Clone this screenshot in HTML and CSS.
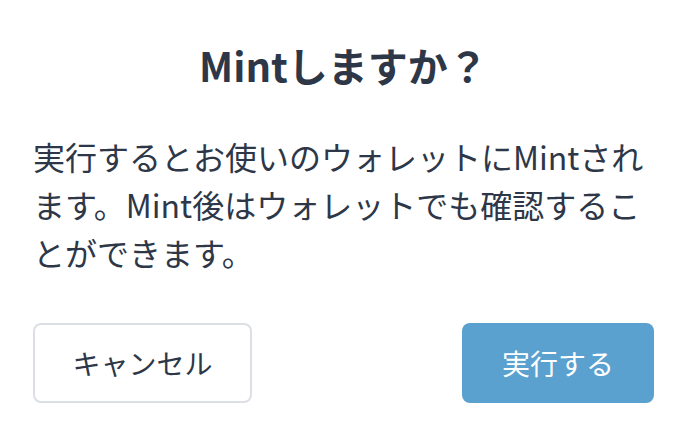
FILE: index.html
```html
<!DOCTYPE html>
<html lang="ja">
<head>
<meta charset="utf-8">
<link rel="stylesheet" href="styles.css">
</head>
<body>
<div class="dialog">
  <h1 class="title">Mintしますか？</h1>
  <p class="message">実行するとお使いのウォレットにMintされます。Mint後はウォレットでも確認することができます。</p>
  <div class="actions">
    <button class="btn btn-cancel">キャンセル</button>
    <button class="btn btn-primary">実行する</button>
  </div>
</div>
</body>
</html>
```
FILE: styles.css
```css
html, body {
  margin: 0;
  padding: 0;
  background: #ffffff;
}
body {
  font-family: "Noto Sans CJK JP", "Noto Sans", sans-serif;
  color: #2d3748;
}
.dialog {
  width: 686px;
  height: 436px;
  box-sizing: border-box;
  padding: 38px 32px 0 33px;
  display: flex;
  flex-direction: column;
}
.title {
  margin: 0;
  font-size: 40px;
  font-weight: 700;
  line-height: 54px;
  text-align: center;
}
.message {
  margin: 40px 0 0;
  font-size: 32px;
  line-height: 48px;
}
.actions {
  margin-top: 47px;
  display: flex;
  justify-content: space-between;
  align-items: center;
}
.btn {
  font-family: inherit;
  font-size: 28px;
  height: 80px;
  border-radius: 8px;
  box-sizing: border-box;
  cursor: pointer;
}
.btn-cancel {
  width: 219px;
  background: #ffffff;
  border: 2px solid #dcdfe4;
  color: #2d3748;
}
.btn-primary {
  width: 192px;
  background: #5aa1d0;
  border: none;
  color: #ffffff;
}
```
